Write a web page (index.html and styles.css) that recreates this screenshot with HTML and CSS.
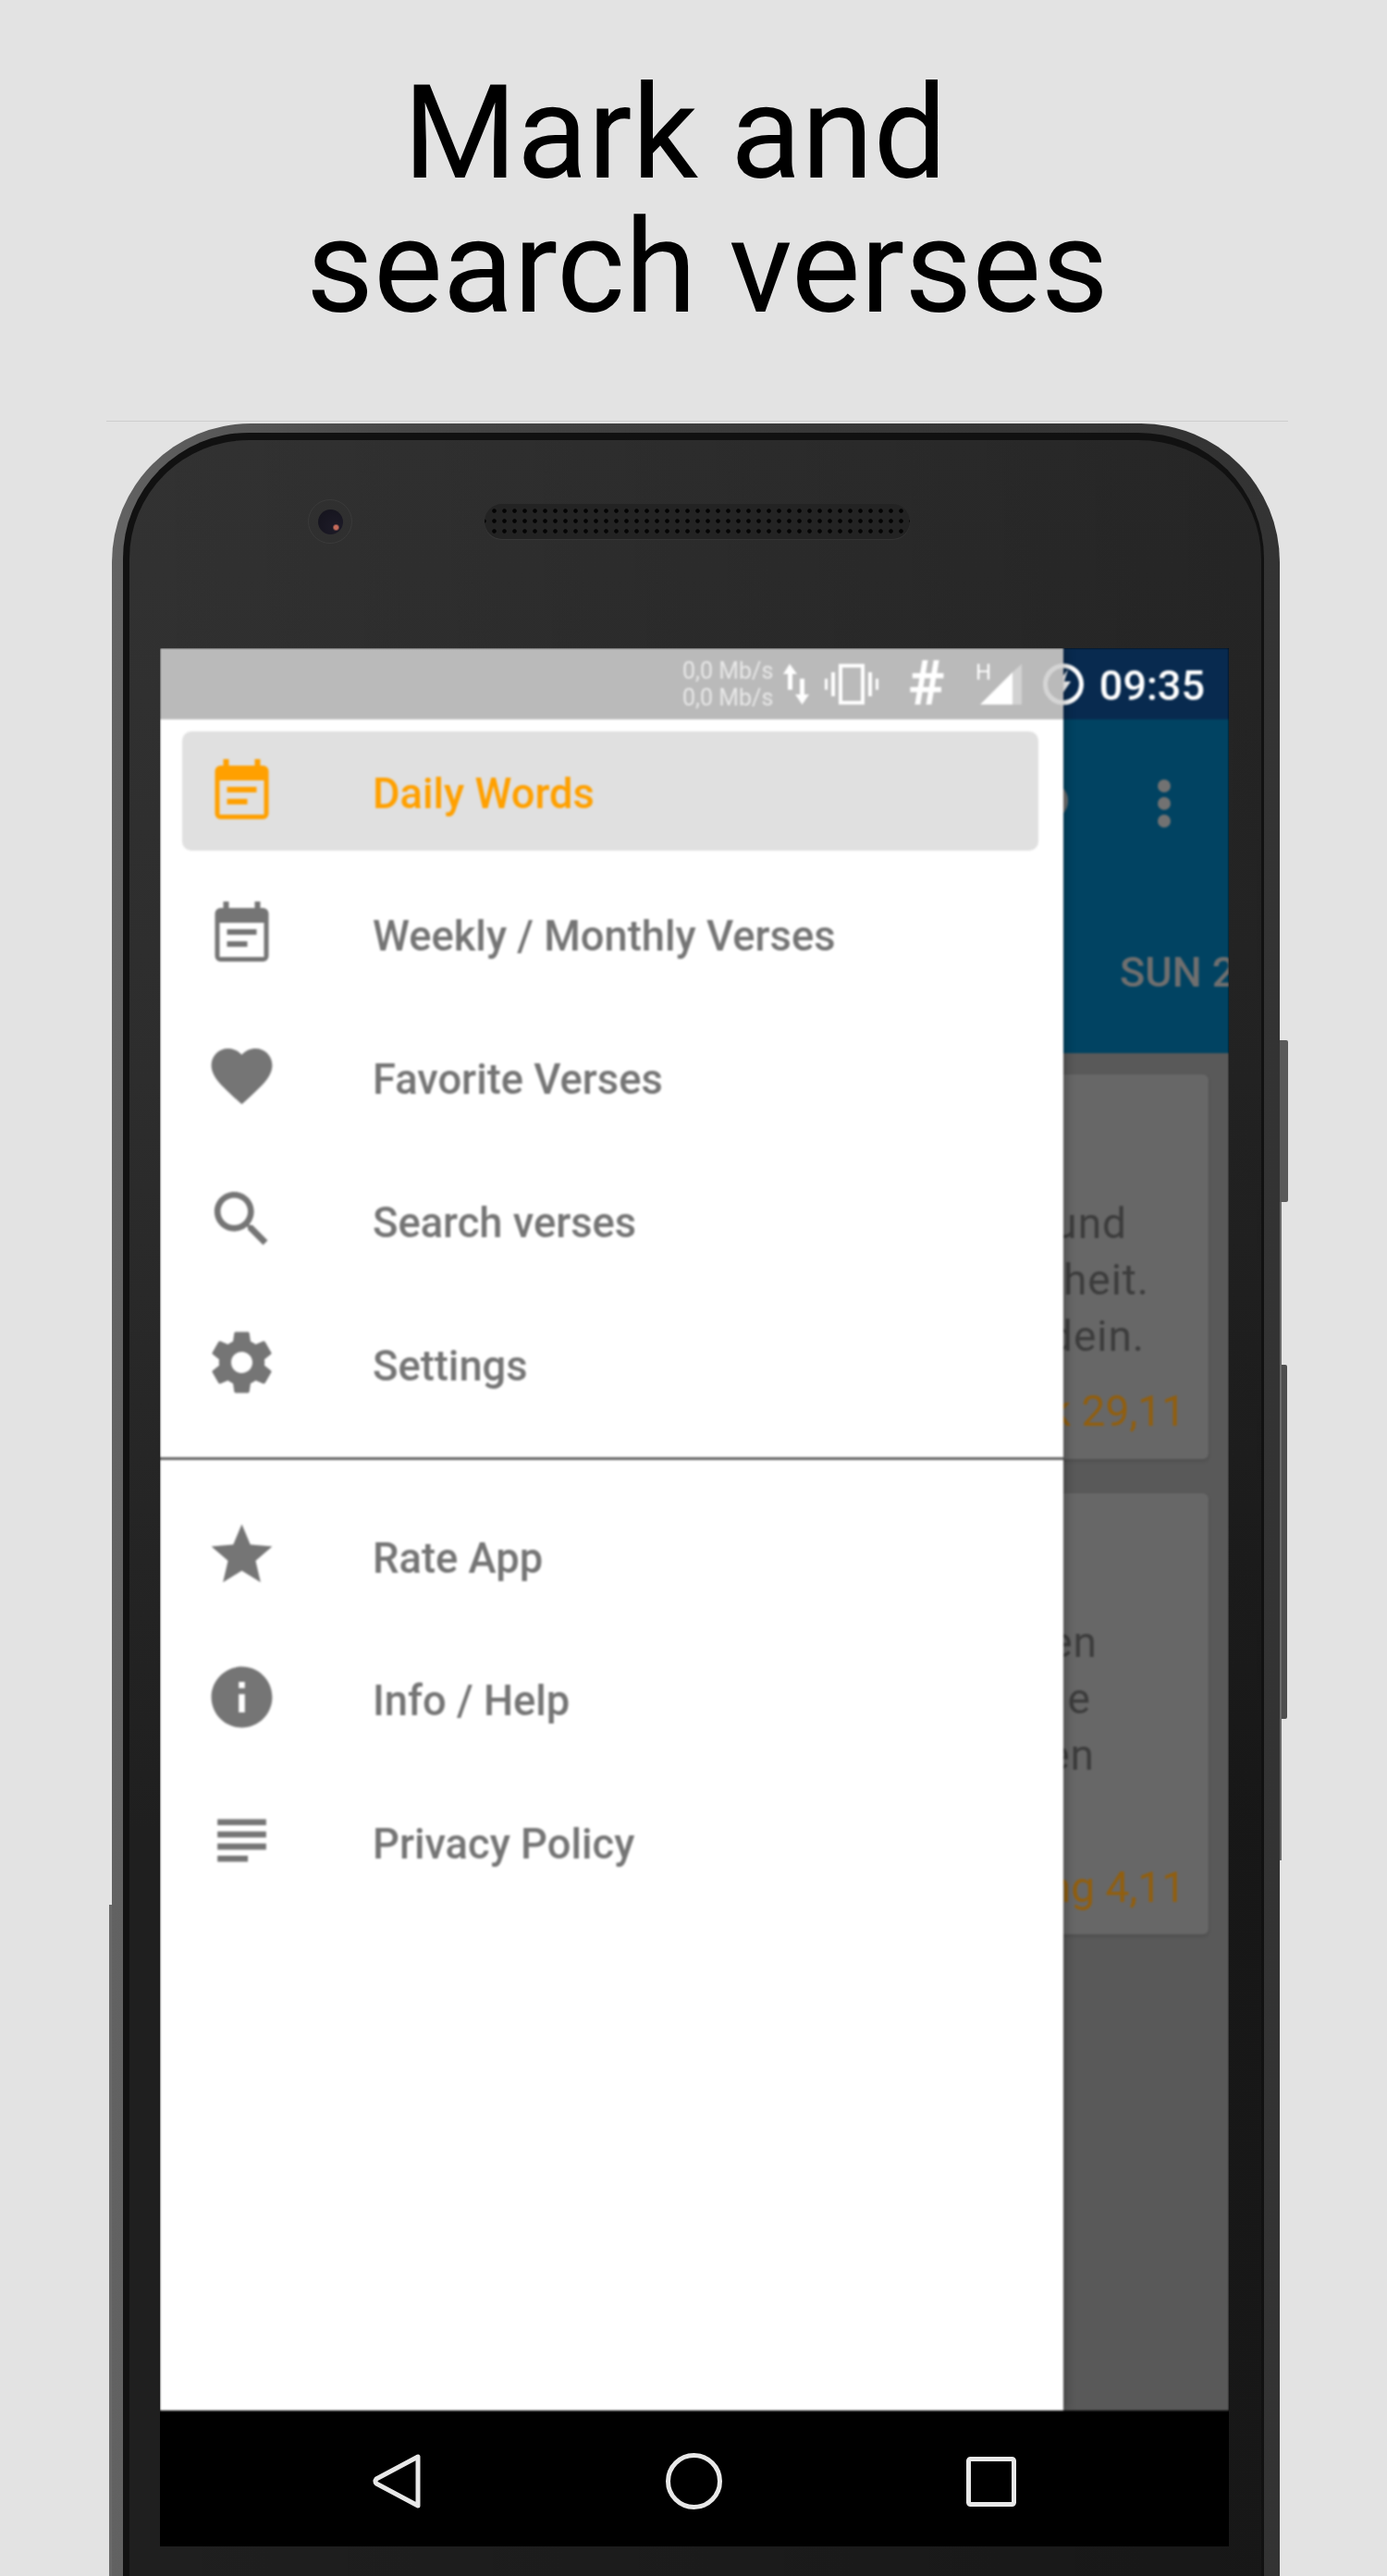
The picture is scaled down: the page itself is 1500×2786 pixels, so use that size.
FILE: index.html
```html
<!DOCTYPE html>
<html>
<head>
	<meta charset="utf-8">
	<title>Mark and search verses</title>
	<link rel="stylesheet" href="styles.css">
</head>
<body>
<h1 class="title"><span class="title-first">Mark and</span><br>search verses</h1>
<div class="rule"></div>
<div class="phone">
	<div class="side-btn side-btn-power"></div>
	<div class="side-btn side-btn-volume"></div>
	<div class="side-seam"></div>
	<div class="side-seam-left"></div>
	<div class="phone-body">
		<div class="earpiece">
			<div class="camera"><div class="lens"></div></div>
			<div class="speaker"></div>
		</div>
		<div class="screen">
			<div class="screen-blur">
				<!-- the app behind the drawer -->
				<div class="app">
					<div class="statusbar">
						<svg class="st-bolt" viewBox="0 0 49 46"><circle cx="24.500" cy="23" r="20" fill="none" stroke="#fff" stroke-width="5"/><path d="M30 7L16 26h7l-3 13 13-19h-7z" fill="#fff"/></svg>
						<span class="clock">09:35</span>
					</div>
					<div class="appbar">
						<div class="appbar-top">
							<div class="ring"></div>
							<div class="dots"><i></i><i></i><i></i></div>
						</div>
						<div class="tab">SUN 2</div>
					</div>
					<div class="cards">
						<div class="card">
							<p class="verse">
								<span class="ln ln-und">und</span>
								<span class="ln ln-heit">heit.</span>
								<span class="ln ln-dein">dein.</span>
							</p>
							<p class="ref">k 29,11</p>
						</div>
						<div class="card card-b">
							<p class="verse">
								<span class="ln ln-en1">en</span>
								<span class="ln ln-e">e</span>
								<span class="ln ln-en2">en</span>
							</p>
							<p class="ref">ng 4,11</p>
						</div>
					</div>
				</div>
				<!-- drawer lies over the app -->
				<div class="drawer">
					<div class="drawer-status">
						<div class="speed">0,0 Mb/s<br>0,0 Mb/s</div>
						<svg class="st-arrows" viewBox="0 0 31 44"><path d="M9 0l8 11h-5v17H7V11H2zM20 16h5v17h5l-7.500 11L15 33h5z" fill="#fff"/></svg>
						<svg class="st-vibrate" viewBox="0 0 58 44" fill="#fff"><path d="M15 0h28v44H15zM19 4v36h20V4z" fill-rule="evenodd"/><path d="M7 9h4v26H7zM47 9h4v26h-4zM0 16h3v12H0zM55 16h3v12h-3z"/></svg>
						<span class="st-hash">#</span>
						<div class="st-signal">
							<span class="st-h">H</span>
							<svg viewBox="0 0 45 44"><path d="M45 0v44H35V9z" fill="#fff" opacity=".35"/><path d="M35 9v35H0z" fill="#fff"/></svg>
						</div>
						<svg class="st-ghost" viewBox="0 0 49 46"><circle cx="24.500" cy="23" r="20" fill="none" stroke="#fff" stroke-width="5" opacity=".4"/></svg>
					</div>
					<div class="menu">
						<a class="item item-on">
							<svg class="ic ic-cal" viewBox="0 0 58 65"><path fill-rule="evenodd" d="M9 0h6v7h28V0h6v7h3a6 6 0 0 1 6 6v46a6 6 0 0 1-6 6H6a6 6 0 0 1-6-6V13a6 6 0 0 1 6-6h3zM5 23v37h48V23zM13 30h32v6H13zM13 43h22v6H13z"/></svg>
							<span class="label">Daily Words</span>
						</a>
						<a class="item">
							<svg class="ic ic-cal" viewBox="0 0 58 65"><path fill-rule="evenodd" d="M9 0h6v7h28V0h6v7h3a6 6 0 0 1 6 6v46a6 6 0 0 1-6 6H6a6 6 0 0 1-6-6V13a6 6 0 0 1 6-6h3zM5 23v37h48V23zM13 30h32v6H13zM13 43h22v6H13z"/></svg>
							<span class="label">Weekly / Monthly Verses</span>
						</a>
						<a class="item">
							<svg class="ic" viewBox="0 0 24 24"><path d="M12 21.350l-1.450-1.320C5.400 15.360 2 12.280 2 8.500 2 5.420 4.420 3 7.500 3c1.740 0 3.410.81 4.500 2.090C13.090 3.810 14.760 3 16.500 3 19.580 3 22 5.420 22 8.500c0 3.780-3.400 6.860-8.550 11.540L12 21.350z"/></svg>
							<span class="label">Favorite Verses</span>
						</a>
						<a class="item">
							<svg class="ic" viewBox="0 0 24 24"><path d="M15.500 14h-.79l-.28-.27C15.410 12.590 16 11.110 16 9.500 16 5.910 13.090 3 9.500 3S3 5.910 3 9.500 5.910 16 9.500 16c1.610 0 3.090-.59 4.230-1.570l.27.28v.79l5 4.990L20.490 19l-4.990-5zm-6 0C7.010 14 5 11.990 5 9.500S7.010 5 9.500 5 14 7.010 14 9.500 11.990 14 9.500 14z"/></svg>
							<span class="label">Search verses</span>
						</a>
						<a class="item">
							<svg class="ic" viewBox="0 0 24 24"><path d="M19.430 12.980c.04-.32.07-.64.07-.98s-.03-.66-.07-.98l2.110-1.650c.19-.15.24-.42.12-.64l-2-3.460c-.12-.22-.39-.3-.61-.22l-2.490 1c-.52-.4-1.080-.73-1.690-.98l-.38-2.650C14.460 2.180 14.250 2 14 2h-4c-.25 0-.46.18-.49.42l-.38 2.650c-.61.25-1.170.59-1.690.98l-2.490-1c-.23-.09-.49 0-.61.22l-2 3.460c-.13.22-.07.49.12.64l2.110 1.650c-.04.32-.07.65-.07.98s.03.66.07.98l-2.110 1.650c-.19.15-.24.42-.12.64l2 3.460c.12.22.39.3.61.22l2.490-1c.52.4 1.080.73 1.690.98l.38 2.650c.03.24.24.42.49.42h4c.25 0 .46-.18.49-.42l.38-2.650c.61-.25 1.170-.59 1.690-.98l2.490 1c.23.09.49 0 .61-.22l2-3.460c.12-.22.07-.49-.12-.64l-2.110-1.650zM12 15.500c-1.930 0-3.500-1.570-3.500-3.500s1.570-3.500 3.500-3.500 3.500 1.570 3.500 3.500-1.570 3.500-3.500 3.500z"/></svg>
							<span class="label">Settings</span>
						</a>
					</div>
					<div class="divider"></div>
					<div class="menu">
						<a class="item">
							<svg class="ic" viewBox="0 0 24 24"><path d="M12 17.270L18.180 21l-1.640-7.030L22 9.240l-7.190-.61L12 2 9.190 8.630 2 9.240l5.460 4.730L5.820 21z"/></svg>
							<span class="label">Rate App</span>
						</a>
						<a class="item">
							<svg class="ic" viewBox="0 0 24 24"><path d="M12 2C6.480 2 2 6.480 2 12s4.480 10 10 10 10-4.480 10-10S17.520 2 12 2zm1 15h-2v-6h2v6zm0-8h-2V7h2v2z"/></svg>
							<span class="label">Info / Help</span>
						</a>
						<a class="item">
							<svg class="ic" viewBox="0 0 24 24"><path d="M14 17H4v2h10v-2zm6-8H4v2h16V9zM4 15h16v-2H4v2zM4 5v2h16V5H4z"/></svg>
							<span class="label">Privacy Policy</span>
						</a>
					</div>
				</div>
			</div>
			<div class="navbar">
				<svg class="nav-back" viewBox="0 0 52 61"><path d="M49 4v53L4 33a4 4 0 0 1 0-5z" fill="none" stroke="#e8e8e8" stroke-width="5" stroke-linejoin="round"/></svg>
				<svg class="nav-home" viewBox="0 0 61 61"><circle cx="30.500" cy="30.500" r="28" fill="none" stroke="#e8e8e8" stroke-width="5"/></svg>
				<svg class="nav-recent" viewBox="0 0 54 54"><rect x="2.500" y="2.500" width="49" height="49" rx="2" fill="none" stroke="#e8e8e8" stroke-width="5"/></svg>
			</div>
		</div>
	</div>
</div>
</body>
</html>
```

FILE: styles.css
```css
html, body {
	margin: 0;
	padding: 0;
}
body {
	width: 1500px;
	height: 2786px;
	overflow: hidden;
	background: #e3e3e3;
	font-family: Roboto, "Liberation Sans", sans-serif;
}
.title {
	margin: 0;
	padding-top: 71px;
	padding-left: 30px;
	height: 389px;
	box-sizing: border-box;
	text-align: center;
	font-size: 141px;
	line-height: 145px;
	font-weight: 400;
	color: #000;
}
.title-first {
	padding-right: 70px;
}
.rule {
	height: 1px;
	margin-left: 115px;
	width: 1278px;
	margin-top: 66px;
	background: #cdcdcd;
}

/* phone frame */
.phone {
	position: relative;
	box-sizing: border-box;
	margin-left: 121px;
	margin-top: 2px;
	width: 1263px;
	height: 2328px;
	padding: 10px 17px 0 12px;
	border-radius: 150px 150px 0 0;
	background: linear-gradient(90deg, #626262 0, #474747 25%, #383838 60%, #333 100%);
}
.phone-body {
	box-sizing: border-box;
	height: 100%;
	border: solid #111;
	border-width: 8px 3px 0 7px;
	border-radius: 136px 136px 0 0;
	padding: 0 34px 0 33px;
	background:
		linear-gradient(90deg, transparent 0, rgba(0,0,0,.25) 100%),
		linear-gradient(180deg, #323232 0, #2d2d2d 30%, #1f1f1f 65%);
}
.side-btn {
	position: absolute;
	left: 100%;
	background: #5a5a5a;
	border-radius: 0 2px 2px 0;
}
.side-btn-power {
	top: 667px;
	width: 9px;
	height: 175px;
}
.side-btn-volume {
	top: 1018px;
	width: 8px;
	height: 383px;
	background: #4e4e4e;
}
.side-seam {
	position: absolute;
	left: 100%;
	top: 842px;
	width: 2px;
	height: 712px;
	background: #6a6a6a;
}
.side-seam-left {
	position: absolute;
	right: 100%;
	top: 1602px;
	bottom: 0;
	width: 3px;
	background: #6a6a6a;
}
.earpiece {
	display: flex;
	align-items: center;
	height: 176px;
	margin-bottom: 49px;
	padding-left: 160px;
	gap: 143px;
	box-sizing: border-box;
}
.camera {
	width: 46px;
	height: 46px;
	border-radius: 50%;
	border: 1px solid #3a3a3a;
	display: flex;
	align-items: center;
	justify-content: center;
	flex: none;
}
.lens {
	width: 27px;
	height: 27px;
	border-radius: 50%;
	background: radial-gradient(circle at 72% 72%, #c46a5a 0, #c46a5a 2px, #1c1a26 4px, #14131c 100%);
}
.speaker {
	width: 460px;
	height: 38px;
	border-radius: 19px;
	flex: none;
	background-color: #232323;
	background-image: radial-gradient(circle, #050505 0, #050505 1.800px, transparent 2.800px);
	background-size: 11px 11px;
	background-position: 5px 2px;
	box-shadow: 0 1px 1px rgba(255,255,255,.06);
}

/* screen */
.screen {
	width: 1156px;
	height: 2053px;
	overflow: hidden;
	background: #000;
}
.screen-blur {
	position: relative;
	height: 1906px;
	overflow: hidden;
	filter: blur(.8px);
}
.app {
	height: 100%;
	background: #595959;
}
.statusbar {
	height: 77px;
	background: #082a4f;
	display: flex;
	align-items: center;
	justify-content: flex-end;
	color: #fff;
	padding-right: 26px;
	padding-top: 4px;
	box-sizing: border-box;
}
.st-bolt {
	width: 49px;
	height: 46px;
	margin-right: 15px;
	margin-top: -4px;
}
.clock {
	font-size: 45px;
	font-weight: 500;
}
.appbar {
	height: 361px;
	background: #014362;
	color: #6f6f6f;
	display: flex;
	flex-direction: column;
}
.appbar-top {
	height: 257px;
	display: flex;
	justify-content: flex-end;
	padding-right: 63px;
	padding-top: 65px;
	box-sizing: border-box;
	gap: 97px;
}
.ring {
	width: 26px;
	height: 26px;
	margin-top: 2px;
	border: 8px solid #707070;
	border-radius: 50%;
}
.dots {
	display: flex;
	flex-direction: column;
	gap: 5px;
}
.dots i {
	display: block;
	width: 14px;
	height: 14px;
	border-radius: 50%;
	background: #727272;
}
.tab {
	align-self: flex-start;
	margin-left: 1038px;
	margin-top: -10px;
	font-size: 45px;
	font-weight: 500;
	white-space: nowrap;
}
.cards {
	display: flex;
	flex-direction: column;
	gap: 37px;
	padding: 23px 22px 0 0;
}
.card {
	box-sizing: border-box;
	height: 416px;
	background: #676767;
	border-radius: 6px;
	box-shadow: 0 2px 4px rgba(0,0,0,.15);
	text-align: right;
	color: #3c3c3c;
	overflow: hidden;
}
.card-b {
	height: 477px;
}
.verse {
	margin: 0;
	padding-top: 131px;
	font-size: 46px;
	line-height: 61px;
	letter-spacing: 1px;
}
.ln {
	display: block;
}
.ln-und { margin-right: 88px; }
.ln-heit { margin-right: 64px; }
.ln-dein { margin-right: 69px; }
.ln-en1 { margin-right: 120px; }
.ln-e { margin-right: 127px; }
.ln-en2 { margin-right: 123px; }
.ref {
	margin: 20px 25px 0 0;
	font-size: 46px;
	line-height: 61px;
	color: #915e0e;
}
.card-b .ref {
	margin-top: 82px;
}

/* drawer */
.drawer {
	position: absolute;
	left: 0;
	top: 0;
	bottom: 0;
	width: 977px;
	background: #fff;
	box-shadow: 3px 0 10px rgba(0,0,0,.25);
}
.drawer-status {
	position: relative;
	height: 77px;
	background: #bababa;
	color: #eee;
	display: flex;
	align-items: center;
	padding-left: 565px;
	box-sizing: border-box;
	overflow: hidden;
}
.speed {
	flex: none;
	width: 100px;
	font-size: 25px;
	line-height: 29px;
	text-align: left;
	white-space: nowrap;
	color: #e8e8e8;
}
.st-arrows {
	flex: none;
	width: 31px;
	height: 44px;
	margin-left: 7px;
}
.st-vibrate {
	flex: none;
	width: 58px;
	height: 44px;
	margin-left: 16px;
}
.st-hash {
	flex: none;
	font-size: 66px;
	font-weight: 700;
	color: #fff;
	margin-left: 31px;
	width: 42px;
	line-height: 1;
	text-align: center;
}
.st-signal {
	flex: none;
	position: relative;
	margin-left: 37px;
	width: 45px;
	height: 44px;
}
.st-signal svg {
	width: 45px;
	height: 44px;
	display: block;
}
.st-h {
	position: absolute;
	left: -5px;
	top: -3px;
	font-size: 24px;
	line-height: 24px;
	color: #fff;
}
.st-ghost {
	position: absolute;
	right: -25px;
	top: 16px;
	width: 49px;
	height: 46px;
}
.menu {
	display: flex;
	flex-direction: column;
	gap: 25.750px;
	padding: 13px 27px 0 24px;
}
.item {
	display: flex;
	align-items: center;
	height: 129px;
	border-radius: 10px;
	color: #757575;
	fill: #757575;
	padding-left: 25px;
}
.item-on {
	background: #e0e0e0;
	color: #ffa000;
	fill: #ffa000;
}
.ic {
	width: 79px;
	height: 79px;
	flex: none;
	margin-bottom: 3px;
}
.ic-cal {
	padding: 7px 10px;
	box-sizing: border-box;
	margin-bottom: 5px;
}
.label {
	margin-left: 102px;
	margin-top: 5px;
	font-size: 45.300px;
	font-weight: 500;
	white-space: nowrap;
}
.divider {
	height: 3px;
	margin-top: 37px;
	background: #666;
}
.divider + .menu {
	padding-top: 39px;
}

/* bottom nav */
.navbar {
	height: 147px;
	box-sizing: border-box;
	padding-top: 6px;
	background: #000;
	display: flex;
	align-items: center;
}
.nav-back {
	width: 52px;
	height: 61px;
	margin-left: 230px;
}
.nav-home {
	width: 61px;
	height: 61px;
	margin-left: 265px;
}
.nav-recent {
	width: 54px;
	height: 54px;
	margin-left: 264px;
}
```
